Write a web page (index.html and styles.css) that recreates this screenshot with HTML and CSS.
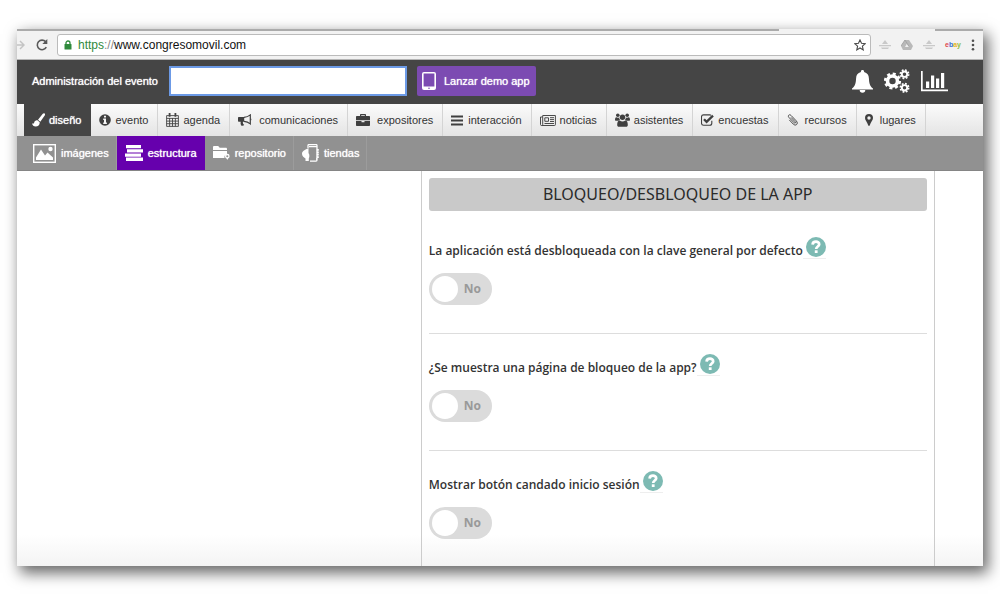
FILE: index.html
```html
<!DOCTYPE html>
<html lang="es">
<head>
<meta charset="utf-8">
<title>Administración del evento</title>
<link rel="stylesheet" href="styles.css">
</head>
<body>
<div class="window">
  <div class="tabstrip"><span class="tabstrip-gap"></span></div>
  <div class="toolbar">
    <svg class="ico-forward" width="8" height="12" viewBox="0 0 8 12"><path d="M0 6h7M3 2l4 4-4 4" fill="none" stroke="#c4c4c4" stroke-width="1.5"/></svg>
    <svg class="ico-reload" width="14" height="14" viewBox="0 0 14 14"><path d="M11.3 9.2A4.8 4.8 0 1 1 10.6 3.6" fill="none" stroke="#5a5a5a" stroke-width="1.6"/><path d="M12.3 1v5H7.3z" fill="#5a5a5a"/></svg>
    <div class="address">
      <svg width="8" height="10" viewBox="0 0 8 10"><path d="M2 5V3a2 2 0 0 1 4 0v2" fill="none" stroke="#2f8a3c" stroke-width="1.3"/><rect x=".5" y="4" width="7" height="5.5" rx=".6" fill="#2f8a3c"/></svg>
      <span class="url"><span class="scheme">https</span><span class="slashes">://</span>www.congresomovil.com</span>
      <svg class="ico-star" width="12" height="12" viewBox="0 0 12 12"><path d="M6 .9l1.5 3.4 3.7.4-2.8 2.5.8 3.7L6 9l-3.2 1.900.8-3.700L.8 4.700l3.700-.4z" fill="none" stroke="#4a4a4a" stroke-width="1.1"/></svg>
    </div>
    <div class="extensions">
      <svg width="12" height="12" viewBox="0 0 12 12"><path d="M6 1l3 4H3zM0 6h12v1.300H0zM2 8.500h8L9 10H3z" fill="#c9c9c9"/></svg>
      <svg width="12" height="12" viewBox="0 0 12 12"><path d="M4 1h4l4 6-2 4H2L0 7z" fill="#b9b9b9"/><path d="M6 4.500L8 8H4z" fill="#eee"/><path d="M4 1l4 6.500M0 7l4-6" stroke="#a5a5a5" fill="none"/></svg>
      <svg width="12" height="12" viewBox="0 0 12 12"><path d="M6 1l3 4H3zM0 6h12v1.300H0zM2 8.500h8L9 10H3z" fill="#c9c9c9"/></svg>
      <span class="ebay"><span class="e">e</span><span class="b">b</span><span class="a">a</span><span class="y">y</span></span>
      <svg class="ico-menu" width="4" height="12" viewBox="0 0 4 12" fill="#505050"><circle cx="2" cy="1.700" r="1.300"/><circle cx="2" cy="6" r="1.300"/><circle cx="2" cy="10.300" r="1.300"/></svg>
    </div>
  </div>

  <header class="header">
    <label class="header-label" for="event">Administración del evento</label>
    <input class="header-input" id="event" type="text">
    <button class="demo" type="button">
      <svg width="14" height="18" viewBox="0 0 14 18"><path fill="#fff" fill-rule="evenodd" d="M2 0h10a2 2 0 0 1 2 2v14a2 2 0 0 1-2 2H2a2 2 0 0 1-2-2V2a2 2 0 0 1 2-2zm-.4 1.600v12.800h10.800V1.600zM7 15.400a.8.8 0 1 0 0 1.600.8.8 0 0 0 0-1.600z"/></svg>
      Lanzar demo app
    </button>
    <div class="header-icons">
      <svg width="21" height="23" viewBox="0 0 21 23" fill="#fff"><path d="M10.500 0c1 0 1.600.7 1.600 1.600v.5c3.200.8 4.700 3.200 4.800 6.200.2 5.300 1.200 8 4.100 10.300v.9H0v-.9c2.900-2.300 3.900-5 4.100-10.300.1-3 1.600-5.400 4.800-6.200v-.5C8.900.7 9.500 0 10.500 0zM7.700 20h5.600a2.800 2.800 0 0 1-5.600 0z"/></svg>
      <svg width="26" height="24" viewBox="0 0 26 24" fill="none" stroke="#fff"><circle cx="8.500" cy="12" r="5" stroke-width="3.600"/><circle cx="8.500" cy="12" r="7.300" stroke-width="2.600" stroke-dasharray="3 2.733"/><circle cx="20.500" cy="5.200" r="2.700" stroke-width="1.900"/><circle cx="20.500" cy="5.200" r="4.200" stroke-width="1.600" stroke-dasharray="1.800 1.499"/><circle cx="20.500" cy="18.800" r="2.700" stroke-width="1.900"/><circle cx="20.500" cy="18.800" r="4.200" stroke-width="1.600" stroke-dasharray="1.800 1.499"/></svg>
      <svg width="27" height="21" viewBox="0 0 27 21" fill="#fff"><path d="M0 0h1.700v18.600H27v1.700H0zM5 10.500h3.200v6.500H5zM10 4.500h3.200V17H10zM15 7.500h3.200V17H15zM20 2h3.200v15H20z"/></svg>
    </div>
  </header>

  <nav class="nav">
    <a class="tab active" href="#"><svg width="13" height="14" viewBox="0 0 13 14" fill="#fff"><path d="M12.600.4c.6.600.5 1.300.1 2L8.300 8.700 6 6.700l4.800-5.900c.5-.6 1.200-.9 1.800-.4zM5.400 7.300l2.300 2c.3 2.600-1.500 4.300-4 4.300C1.700 13.600.5 12.400 0 10.300c1.200.7 2 .2 2.200-.8.300-1.500 1.700-2.500 3.200-2.200z"/></svg>diseño</a>
    <a class="tab" href="#"><svg width="12" height="12" viewBox="0 0 12 12"><circle cx="6" cy="6" r="5.800" fill="#3f3f3f"/><path d="M5 1.800h2v1.700H5zM4.200 4.600H7v3.900h.9V10H4.200V8.500H5V6h-.8z" fill="#f4f4f4"/></svg>evento</a>
    <a class="tab" href="#"><svg width="13" height="14" viewBox="0 0 13 14"><path d="M.6 2.600h11.800v10.800H.6zM.6 5.400h11.800M.6 8.100h11.800M.6 10.700h11.800M3.600 5v8.400M6.500 5v8.400M9.400 5v8.400" fill="none" stroke="#444" stroke-width=".9"/><path d="M2.700 0h1.800v3.800H2.700zM8.500 0h1.800v3.800H8.500z" fill="#444"/></svg>agenda</a>
    <a class="tab wide" href="#"><svg width="14" height="13" viewBox="0 0 14 13"><path d="M0 4c0-.6.4-1 1-1h5.200v4.800H4.900c-.2 1.500.3 2.400 1.300 3.300-.8.900-2.500.9-3.200.1-.5-1.200-.5-2.200-.3-3.400H1c-.6 0-1-.4-1-1z" fill="#3f3f3f"/><path d="M6 3.400C8.600 3.200 10.600 2.300 12.300.9v9C10.600 8.500 8.600 7.600 6 7.400" fill="none" stroke="#3f3f3f" stroke-width="1.200"/><path d="M12.600 4.200a1.300 1.300 0 0 1 0 2.400z" fill="#3f3f3f"/></svg>comunicaciones</a>
    <a class="tab wide" href="#"><svg width="14" height="12" viewBox="0 0 14 12"><path fill="#3f3f3f" fill-rule="evenodd" d="M4 2V.8C4 .3 4.300 0 4.800 0h4.400c.5 0 .8.300.8.800V2h3c.6 0 1 .4 1 1v3.200H0V3c0-.6.4-1 1-1zm1.200 0h3.600V1.200H5.200zM0 7h5.500v1.300h3V7H14v4c0 .6-.4 1-1 1H1c-.6 0-1-.4-1-1z"/></svg>expositores</a>
    <a class="tab" href="#"><svg width="13" height="11" viewBox="0 0 13 11"><path d="M0 .5h12v2H0zM0 4.500h12v2H0zM0 8.500h12v2H0z" fill="#3f3f3f"/></svg>interacción</a>
    <a class="tab" href="#"><svg width="16" height="11" viewBox="0 0 16 11"><path d="M2.700.5h12.700v9.200c0 .5-.3.800-.8.800H1.500c-.6 0-1-.4-1-1V2h2.200M2.700.5v9c0 .6-.4 1-1 1M4.800 2.800h3.700v3.500H4.800zM10 2.700h4M10 4.600h4M10 6.500h4M4.500 8.500H14" fill="none" stroke="#4a4a4a" stroke-width="1"/></svg>noticias</a>
    <a class="tab" href="#"><svg width="15" height="14" viewBox="0 0 15 14" fill="#3f3f3f"><circle cx="2.800" cy="2.200" r="1.800"/><circle cx="12.200" cy="2.200" r="1.800"/><circle cx="7.500" cy="4.300" r="2.700"/><path d="M0 7.300c0-1.800.3-3.100 1.300-3.100.8.600 2 .6 2.800.2.100 1.100.4 1.800 1 2.500-.8.100-1.400.4-1.900.9H.8c-.5 0-.8-.2-.8-.5zM15 7.300c0-1.800-.3-3.100-1.300-3.100-.8.600-2 .6-2.800.2-.1 1.100-.4 1.800-1 2.500.8.100 1.400.4 1.900.9h2.400c.5 0 .8-.2.800-.5zM2.200 12c0-2.600.6-4.600 2.500-4.600 1.600 1.400 4 1.400 5.600 0 1.900 0 2.500 2 2.500 4.600 0 1.200-.6 1.800-1.700 1.800H3.900c-1.100 0-1.700-.6-1.700-1.800z"/></svg>asistentes</a>
    <a class="tab" href="#"><svg width="13" height="12" viewBox="0 0 13 12" fill="none" stroke="#3f3f3f"><path d="M10.800 6.800v2.400c0 1.200-.8 2-2 2H2.500c-1.200 0-2-.8-2-2V2.900c0-1.200.8-2 2-2h6.300c.5 0 .9.100 1.200.3" stroke-width="1.100"/><path d="M3 5.200l2.600 2.700L12 1.700" stroke-width="2.300"/></svg>encuestas</a>
    <a class="tab wide" href="#"><svg width="11" height="12" viewBox="0 0 11 12"><path d="M4 3.400l4.100 4.300c.9 1 .1 2-.9 1.100L2 3.500C.3 1.700 2.300-.2 4 1.400l5.200 5.400c2.700 2.900-.4 5.900-3 3.200L2.300 5.900" fill="none" stroke="#4a4a4a" stroke-width="1"/></svg>recursos</a>
    <a class="tab wide" href="#"><svg width="8" height="12" viewBox="0 0 8 12"><path fill="#3f3f3f" fill-rule="evenodd" d="M4 0a4 4 0 0 1 4 4c0 2.200-2.300 4.300-3.300 7.500-.2.600-1.200.6-1.400 0C2.300 8.300 0 6.200 0 4a4 4 0 0 1 4-4zm0 2.300a1.700 1.700 0 1 0 0 3.400 1.700 1.700 0 0 0 0-3.400z"/></svg>lugares</a>
  </nav>

  <nav class="subnav">
    <a class="subtab" href="#"><svg width="23" height="19" viewBox="0 0 23 19"><rect x=".7" y=".7" width="21.600" height="17.600" fill="none" stroke="#fff" stroke-width="1.400"/><path d="M3 16v-2.500l5-8 4 6 2.500-3 5.500 5V16z" fill="#fff"/><circle cx="17.500" cy="5" r="2.200" fill="#fff"/></svg>imágenes</a>
    <a class="subtab active" href="#"><svg width="18" height="16" viewBox="0 0 18 16" fill="#fff"><path d="M1 0h15v3.300H1zM2 4.200h16v3.300H2zM0 8.400h16v3.300H0zM1 12.600h17V16H1z"/></svg>estructura</a>
    <a class="subtab" href="#"><svg width="17" height="14" viewBox="0 0 17 14"><path d="M0 1.200C0 .5.500 0 1.200 0h4l1.500 1.800h6.100c.7 0 1.200.5 1.200 1.200v1H0zM0 5h14v3.500a3 3 0 0 0-2.500 3.500H0z" fill="#fff"/><circle cx="14.300" cy="10.200" r="1.700" fill="none" stroke="#fff" stroke-width="1.300"/><path d="M13.300 12h2l-1 2z" fill="#fff"/></svg>repositorio</a>
    <a class="subtab" href="#"><svg width="17" height="18" viewBox="0 0 17 18"><path d="M6 4V1.500c0-.5.400-.9.900-.9h7.200c.5 0 .9.400.9.900v14.600c0 .6-.4 1-1 1H8M7 2.700h8M14 15h1" fill="none" stroke="#fff" stroke-width="1.300"/><path d="M15.800 5v9" fill="none" stroke="#fff" stroke-width="2" stroke-dasharray="1.800 .6"/><path d="M6.500 4v5c1.500 2 .8 4.500.3 5.500V17H3.500v-2.500C1.500 13.500 0 12 0 9.800 0 7 3 6 6.500 4z" fill="#fff"/></svg>tiendas</a>
  </nav>

  <main class="content">
    <section class="panel">
      <h1 class="panel-title">BLOQUEO/DESBLOQUEO DE LA APP</h1>
      <div class="setting">
        <div class="setting-head">
          <label for="s1">La aplicación está desbloqueada con la clave general por defecto</label>
          <button class="help" type="button" aria-label="Ayuda"><svg width="20" height="20" viewBox="0 0 20 20"><circle cx="10" cy="10" r="10" fill="#7dbab3"/><path d="M6.600 7.600C6.800 3.600 13.300 3.900 13.200 7.400 13.100 9.500 10.200 9.600 10.200 12" fill="none" stroke="#fff" stroke-width="2.700"/><path d="M8.800 13.300h2.800v2.700H8.800z" fill="#fff"/></svg></button>
        </div>
        <label class="switch"><input id="s1" type="checkbox" role="switch"><span>No</span></label>
      </div>
      <div class="setting">
        <div class="setting-head">
          <label for="s2">¿Se muestra una página de bloqueo de la app?</label>
          <button class="help" type="button" aria-label="Ayuda"><svg width="20" height="20" viewBox="0 0 20 20"><circle cx="10" cy="10" r="10" fill="#7dbab3"/><path d="M6.600 7.600C6.800 3.600 13.300 3.900 13.200 7.400 13.100 9.500 10.200 9.600 10.200 12" fill="none" stroke="#fff" stroke-width="2.700"/><path d="M8.800 13.300h2.800v2.700H8.800z" fill="#fff"/></svg></button>
        </div>
        <label class="switch"><input id="s2" type="checkbox" role="switch"><span>No</span></label>
      </div>
      <div class="setting">
        <div class="setting-head">
          <label for="s3">Mostrar botón candado inicio sesión</label>
          <button class="help" type="button" aria-label="Ayuda"><svg width="20" height="20" viewBox="0 0 20 20"><circle cx="10" cy="10" r="10" fill="#7dbab3"/><path d="M6.600 7.600C6.800 3.600 13.300 3.900 13.200 7.400 13.100 9.500 10.200 9.600 10.200 12" fill="none" stroke="#fff" stroke-width="2.700"/><path d="M8.800 13.300h2.800v2.700H8.800z" fill="#fff"/></svg></button>
        </div>
        <label class="switch"><input id="s3" type="checkbox" role="switch"><span>No</span></label>
      </div>
    </section>
  </main>
</div>
</body>
</html>
```

FILE: styles.css
```css
* { box-sizing: border-box; }
body {
  margin: 0;
  padding: 29px 17px;
  background: #fff;
  color: #333;
  font: 11px/16px "Liberation Sans", Arial, sans-serif;
}
svg { display: block; flex: none; }
a { color: inherit; text-decoration: none; }
.window { background: #fff; box-shadow: 4px 6px 14px 1px rgba(0, 0, 0, .6); }

/* browser chrome */
.tabstrip { height: 2px; background: #ababab; display: flex; justify-content: flex-end; padding-right: 5%; }
.tabstrip-gap { width: 17%; background: #f2f2f2; }
.toolbar {
  height: 29px;
  display: flex;
  align-items: center;
  background: #f2f2f2;
  border-bottom: 1px solid #b5b5b5;
}
.ico-reload { margin: 0 8px 0 10px; }
.address {
  flex: 1;
  height: 22px;
  display: flex;
  align-items: center;
  gap: 6px;
  padding: 0 4px 0 6px;
  background: #fff;
  border: 1px solid #bbb;
  border-radius: 3px;
}
.url { color: #111; font-size: 12px; }
.scheme { color: #2f8a3c; }
.slashes { color: #888; }
.ico-star { margin-left: auto; }
.extensions { display: flex; align-items: center; gap: 10px; padding: 0 8px; }
.ebay { font-size: 7px; font-weight: bold; width: 14px; }
.ebay .e { color: #e0484d; }
.ebay .b { color: #3b6fd1; }
.ebay .a { color: #e8b422; }
.ebay .y { color: #8fbf3a; }
.ico-menu { margin-left: 2px; }

/* application header */
.header {
  min-height: 44px;
  display: flex;
  align-items: center;
  padding: 0 35px 2px 15px;
  background: #454545;
  color: #fff;
}
.header-label, .demo, .subtab, .tab.active { text-shadow: 0 0 1px currentColor; }
.header-input {
  width: 238px;
  height: 30px;
  margin: 0 10px 0 11px;
  border: 2px solid #6c9ae6;
  background: #fff;
  font: inherit;
}
.demo {
  height: 30px;
  display: flex;
  align-items: center;
  gap: 8px;
  padding: 0 6px 0 5px;
  border: 0;
  border-radius: 2px;
  background: #7c4bb2;
  color: #fff;
  font: inherit;
}
.header-icons { margin-left: auto; display: flex; align-items: center; gap: 11px; }

/* navigation */
.nav {
  height: 32px;
  display: flex;
  padding-left: 7px;
  background: linear-gradient(#fbfbfb, #e4e4e4);
}
.tab {
  display: flex;
  align-items: center;
  gap: 4px;
  padding: 0 9px 0 8px;
  border-right: 1px solid #d4d4d4;
}
.tab.wide { gap: 7px; }
.tab.active { background: #454545; color: #fff; border-color: #454545; }
.subnav { height: 35px; display: flex; background: #919191; color: #fff; border-bottom: 1px solid #858585; }
.subtab {
  display: flex;
  align-items: center;
  gap: 5px;
  padding: 0 7px 0 8px;
  border-right: 1px solid #9c9c9c;
}
.subtab:first-child { padding-left: 16px; }
.subtab.active { background: #6600ad; border-color: #6600ad; }

/* settings */
.content { padding: 0 5% 0 41.8%; background: linear-gradient(#fff 92%, #f4f4f4); }
.panel {
  padding: 7px 7px 0;
  border: solid #ccc;
  border-width: 0 1px;
  font-family: "Noto Sans", sans-serif;
}
.panel-title {
  margin: 0 0 6px;
  padding: 4px 0;
  border-radius: 3px;
  background: #c9c9c9;
  color: #2b2b2b;
  text-align: center;
  font-size: 16px;
  line-height: 25px;
  font-weight: 400;
}
.setting { padding: 20px 0 28px; border-bottom: 1px solid #ddd; }
.setting:last-child { padding-bottom: 27px; border: 0; }
.setting-head {
  display: flex;
  align-items: flex-end;
  margin-bottom: 14px;
  font: 600 12px/16px "Open Sans", sans-serif;
}
.help {
  padding: 0 0 1px 3px;
  border: 0;
  border-bottom: 1px solid #eee;
  background: none;
}
.switch {
  display: flex;
  align-items: center;
  width: 63px;
  height: 32px;
  border-radius: 16px;
  background: #dbdbdb;
  color: #999;
  font-size: 12px;
  font-weight: 700;
}
.switch input {
  appearance: none;
  width: 26px;
  height: 26px;
  margin: 0 6px 0 3px;
  border-radius: 50%;
  background: #fff;
}
```
